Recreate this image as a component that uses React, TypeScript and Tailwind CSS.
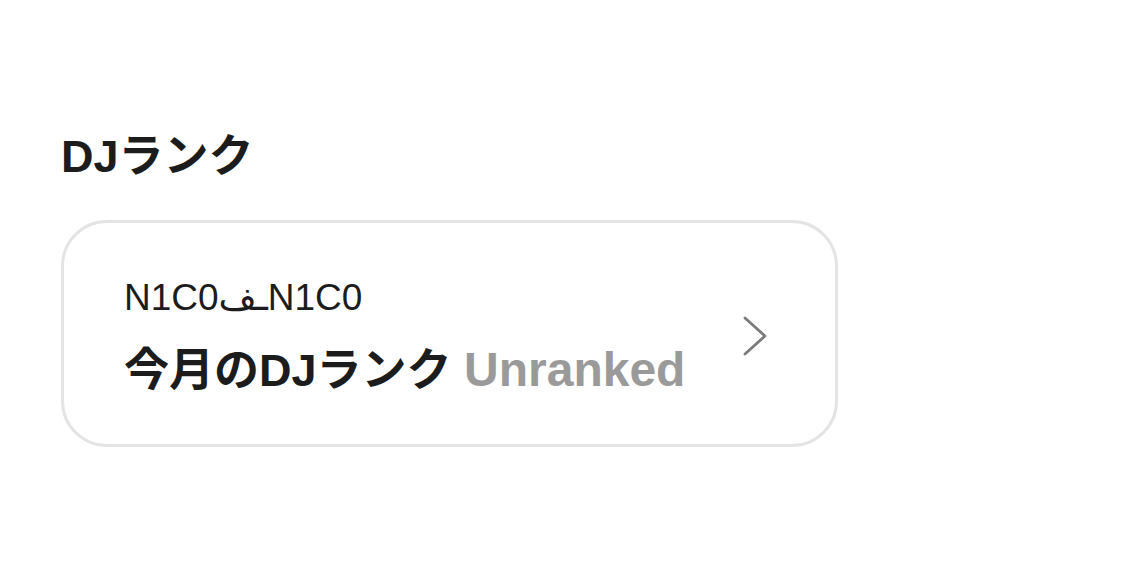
const FONT = '[font-family:"Liberation_Sans","Noto_Sans_CJK_JP","DejaVu_Sans",sans-serif]'

function Chevron() {
  return (
    <svg width="25" height="40" viewBox="0 0 25 40" fill="none" className="shrink-0 text-[#7b7b7b]">
      <polyline points="2,2 22,20 2,38" stroke="currentColor" strokeWidth="2.8" strokeLinecap="round" strokeLinejoin="round" />
    </svg>
  )
}

function RankCard() {
  return (
    <button
      type="button"
      className="flex w-[777px] items-center justify-between rounded-[46px] border-[3px] border-[#e4e4e4] bg-white pt-[51px] pb-[46px] pl-[60px] pr-[67px] text-left"
    >
      <div className="flex flex-col gap-[21px]">
        <span className="text-[37px] leading-[48px] text-[#1c1c1c]">N1C0ـفN1C0</span>
        <span className="text-[45px] font-bold leading-[54px] text-[#1c1c1c]">
          今月のDJランク <span className="text-[48px] text-[#9a9a9a]">Unranked</span>
        </span>
      </div>
      <Chevron />
    </button>
  )
}

export default function App() {
  return (
    <div className={`min-h-[577px] w-full bg-white pl-[61px] pt-[130px] ${FONT}`}>
      <h2 className="text-[45px] font-bold leading-[53px] text-[#1c1c1c]">DJランク</h2>
      <div className="mt-[37px]">
        <RankCard />
      </div>
    </div>
  )
}
